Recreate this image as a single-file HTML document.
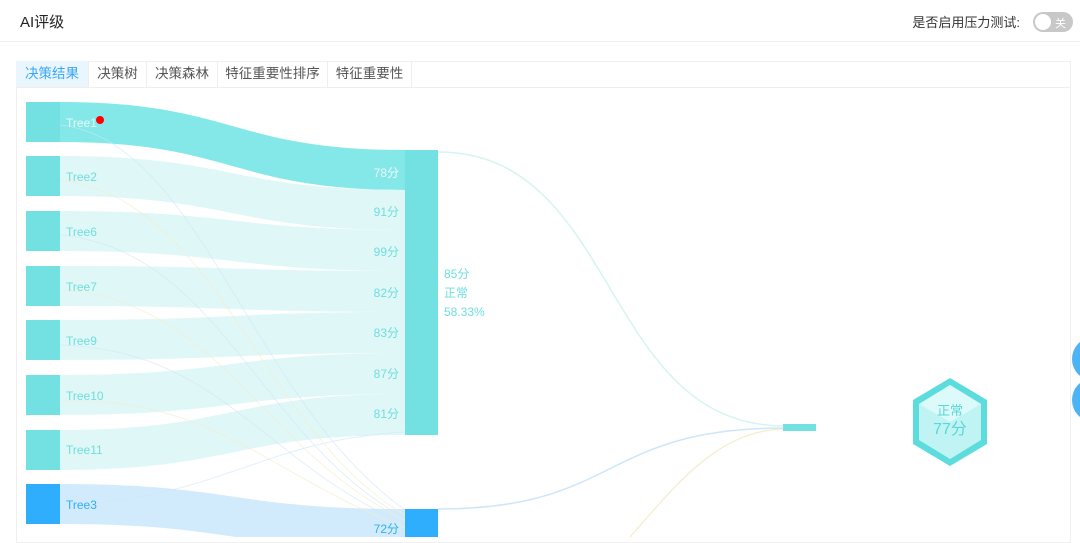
<!DOCTYPE html>
<html><head><meta charset="utf-8"><style>
body{margin:0;width:1080px;height:537px;overflow:hidden;background:#fff;font-family:"Liberation Sans","Noto Sans CJK SC",sans-serif;position:relative}
.hdr{position:absolute;left:0;top:0;width:1080px;height:41px;border-bottom:1px solid #eee}
.t{position:absolute;left:20px;top:11px;font-size:15px;color:#222}
.sw{position:absolute;right:60px;top:12px;font-size:13px;color:#333}
.tg{position:absolute;left:1033px;top:12px;width:40px;height:20px;border-radius:10px;background:#c8c8c8}
.tg i{position:absolute;left:2px;top:2px;width:16px;height:16px;border-radius:50%;background:#fff}
.tg span{position:absolute;left:22px;top:3px;font-size:11px;color:#fff}
.card{position:absolute;left:16px;top:61px;width:1053px;height:480px;border:1px solid #f0f0f0}
.tabs{position:absolute;left:16px;top:61px;height:26px;border-bottom:1px solid #eee;width:1054px}
.tab{position:absolute;top:0;height:26px;line-height:26px;font-size:13.5px;color:#555;text-align:center;border-right:1px solid #eee}
.dot{position:absolute;width:26px;height:44px;border-radius:22px 0 0 22px;background:#4cb3f4;left:1072px}
</style></head><body>
<div class="hdr"><div class="t">AI评级</div><div class="sw">是否启用压力测试:</div><div class="tg"><i></i><span>关</span></div></div>
<div class="card"></div>
<div class="tabs">
<div class="tab" style="left:0;width:72px;background:#eaf6fe;color:#3aa7f5">决策结果</div>
<div class="tab" style="left:73px;width:57px">决策树</div>
<div class="tab" style="left:131px;width:70px">决策森林</div>
<div class="tab" style="left:202px;width:109px">特征重要性排序</div>
<div class="tab" style="left:312px;width:83px">特征重要性</div>
</div>
<svg width="1080" height="537" style="position:absolute;left:0;top:0" font-family="Liberation Sans,Noto Sans CJK SC,sans-serif">
<g>
<path d="M60,102 C232,102 232,150 405,150 L405,190 C232,190 232,142 60,142Z" fill="#85e8e8"/>
<path d="M60,156 C232,156 232,190 405,190 L405,230 C232,230 232,196 60,196Z" fill="#e0f7f7"/>
<path d="M60,211 C232,211 232,230 405,230 L405,271 C232,271 232,251 60,251Z" fill="#e0f7f7"/>
<path d="M60,266 C232,266 232,271 405,271 L405,312 C232,312 232,306 60,306Z" fill="#e0f7f7"/>
<path d="M60,320 C232,320 232,312 405,312 L405,353 C232,353 232,360 60,360Z" fill="#e0f7f7"/>
<path d="M60,375 C232,375 232,353 405,353 L405,394 C232,394 232,415 60,415Z" fill="#e0f7f7"/>
<path d="M60,430 C232,430 232,394 405,394 L405,435 C232,435 232,470 60,470Z" fill="#e0f7f7"/>
<path d="M60,484 C232,484 232,509 405,509 L405,549 C232,549 232,524 60,524Z" fill="#d2ebfc"/>
<g stroke-width="0.8" fill="none" opacity="0.7">
<path d="M60,125 C200,140 250,400 405,510" stroke="#cfe6f8"/>
<path d="M60,180 C220,200 260,430 405,515" stroke="#f5ecc8"/>
<path d="M60,235 C220,250 260,440 405,518" stroke="#cfe6f8"/>
<path d="M60,290 C220,300 260,450 405,520" stroke="#f5ecc8"/>
<path d="M60,345 C220,350 260,460 405,524" stroke="#cfe6f8"/>
<path d="M60,400 C220,400 260,470 405,528" stroke="#f5ecc8"/>
<path d="M60,505 C220,500 260,440 405,432" stroke="#cfe6f8"/>
</g>
<path d="M438,152 C620,152 600,426 785,426" stroke="#d6f3f3" stroke-width="1.5" fill="none"/>
<path d="M438,509 C620,509 600,428 785,428" stroke="#cde6fa" stroke-width="1.5" fill="none"/>
<path d="M630,537 C680,480 720,430 785,429" stroke="#f5ecc8" stroke-width="1.2" fill="none"/>
</g>
<g fill="#73e1e1">
<rect x="26" y="102" width="34" height="40"/><rect x="26" y="156" width="34" height="40"/>
<rect x="26" y="211" width="34" height="40"/><rect x="26" y="266" width="34" height="40"/>
<rect x="26" y="320" width="34" height="40"/><rect x="26" y="375" width="34" height="40"/>
<rect x="26" y="430" width="34" height="40"/>
<rect x="405" y="150" width="33" height="285"/>
<rect x="783" y="424" width="33" height="7"/>
</g>
<rect x="26" y="484" width="34" height="40" fill="#2eaefc"/>
<rect x="405" y="509" width="33" height="30" fill="#2eaefc"/>
<circle cx="100" cy="120" r="4" fill="#f00"/>
<g font-size="12" fill="#6fdede">
<text x="66" y="127" fill="#eafafa">Tree1</text>
<text x="66" y="181">Tree2</text><text x="66" y="236">Tree6</text><text x="66" y="291">Tree7</text>
<text x="66" y="345">Tree9</text><text x="66" y="400">Tree10</text><text x="66" y="454">Tree11</text>
<text x="66" y="509" fill="#2eaefc">Tree3</text>
</g>
<g font-size="12" fill="#6fdede" text-anchor="end">
<text x="399" y="177" fill="#eafafa">78分</text><text x="399" y="216">91分</text><text x="399" y="256">99分</text>
<text x="399" y="297">82分</text><text x="399" y="337">83分</text><text x="399" y="378">87分</text><text x="399" y="418">81分</text>
<text x="399" y="533" fill="#2eaefc">72分</text>
</g>
<g font-size="12" fill="#6fdede"><text x="444" y="278">85分</text><text x="444" y="297">正常</text><text x="444" y="316">58.33%</text></g>
<polygon points="950,378 987,400 987,444 950,466 913,444 913,400" fill="#5cdcdc"/>
<polygon points="950,385 981,404 981,440 950,459 919,440 919,404" fill="#c0f4f4"/>
<polygon points="950,385 981,404 950,422 919,404" fill="#dcfafa"/>
<text x="950" y="415" text-anchor="middle" font-size="13" fill="#5cd6d6">正常</text>
<text x="950" y="434" text-anchor="middle" font-size="16" fill="#5cd6d6">77分</text>
</svg>
<div class="dot" style="top:337px"></div><div class="dot" style="top:378px"></div>
</body></html>
